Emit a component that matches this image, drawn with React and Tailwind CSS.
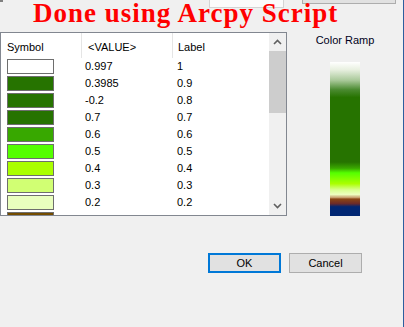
import React from "react";

const rows = [
  { v: "0.997", l: "1", c: "bg-[#ffffff]" },
  { v: "0.3985", l: "0.9", c: "bg-[#267300]" },
  { v: "-0.2", l: "0.8", c: "bg-[#267300]" },
  { v: "0.7", l: "0.7", c: "bg-[#267300]" },
  { v: "0.6", l: "0.6", c: "bg-[#38a800]" },
  { v: "0.5", l: "0.5", c: "bg-[#55ff00]" },
  { v: "0.4", l: "0.4", c: "bg-[#aaff00]" },
  { v: "0.3", l: "0.3", c: "bg-[#d1ff73]" },
  { v: "0.2", l: "0.2", c: "bg-[#e9ffbe]" },
  { v: "", l: "", c: "bg-[#734c00]" },
];

function Chevron({ up }) {
  return (
    <svg width="9" height="6" viewBox="0 0 9 6">
      <polyline
        points={up ? "1,5 4.5,1.5 8,5" : "1,1 4.5,4.5 8,1"}
        fill="none"
        stroke="#606060"
        strokeWidth="1.6"
      />
    </svg>
  );
}

export default function App() {
  return (
    <div className="relative w-[404px] h-[327px] bg-[#f0f0f0] border-r border-[#2d5e9e] overflow-hidden font-['Liberation_Sans',Arial,sans-serif] text-[11px] text-black">
      {/* top strip: partially visible controls */}
      <div className="flex h-[32px] items-start">
        <div className="w-[3px] h-[2px] bg-[#808080]" />
        <div className="ml-[206px] w-[75px] h-[8px] bg-[#fbfbfb] border border-t-0 border-[#d4d4d4]" />
        <div className="ml-[18px] w-[94px] h-[4px] bg-[#e1e1e1] border border-t-0 border-[#adadad]" />
      </div>

      {/* main row */}
      <div className="flex">
        <div className="w-[287px] h-[184px] bg-white border border-[#828790] flex">
          <div className="w-[268px] flex flex-col overflow-hidden">
            <div className="flex h-[25px] shrink-0">
              <div className="w-[81px] pl-[6px] pt-[6px] border-r border-[#e5e5e5]">Symbol</div>
              <div className="w-[91px] pl-[6px] pt-[6px] border-r border-[#e5e5e5]">&lt;VALUE&gt;</div>
              <div className="flex-1 pl-[5px] pt-[6px]">Label</div>
            </div>
            <div className="flex flex-col gap-[2px] pt-[1px]">
              {rows.map((r, i) => (
                <div key={i} className="flex items-center h-[15px] shrink-0">
                  <div className={`ml-[6px] w-[47px] h-[15px] border border-[#6e6e6e] ${r.c}`} />
                  <div className="ml-[31px] w-[92px]">{r.v}</div>
                  <div>{r.l}</div>
                </div>
              ))}
            </div>
          </div>
          <div className="w-[17px] bg-[#f0f0f0] flex flex-col">
            <div className="h-[18px] flex items-center justify-center">
              <Chevron up />
            </div>
            <div className="h-[62px] bg-[#cdcdcd]" />
            <div className="flex-1" />
            <div className="h-[18px] flex items-center justify-center">
              <Chevron />
            </div>
          </div>
        </div>

        <div className="flex-1 flex flex-col items-center">
          <div className="mt-[1px] h-[14px] leading-[14px] text-[#000020]">Color Ramp</div>
          <div className="mt-[15px] w-[30px] h-[154px] bg-[linear-gradient(to_bottom,#ffffff_0%,#e8f0e0_5%,#a8c898_12%,#4a8a30_18%,#267300_23%,#267300_65%,#3aa800_69%,#55ff00_72%,#aaff00_79%,#d8ff90_83%,#eeffc0_86%,#c8a070_88%,#8b4513_89%,#6b2a2a_92%,#002673_94%,#002673_100%)]" />
        </div>
      </div>

      {/* buttons */}
      <div className="flex justify-end gap-[8px] mt-[37px] pr-[41px]">
        <button className="w-[73px] h-[20px] bg-[#e1e1e1] border-2 border-[#0078d7] text-[11px] leading-none">OK</button>
        <button className="w-[73px] h-[20px] bg-[#e1e1e1] border border-[#adadad] text-[11px] leading-none">Cancel</button>
      </div>

      {/* overlay annotation */}
      <div className="absolute left-[33px] top-0 text-[27px] leading-none font-bold tracking-[1px] text-[#ff0000] font-['Liberation_Serif','Times_New_Roman',serif] whitespace-nowrap">
        Done using Arcpy Script
      </div>
    </div>
  );
}
